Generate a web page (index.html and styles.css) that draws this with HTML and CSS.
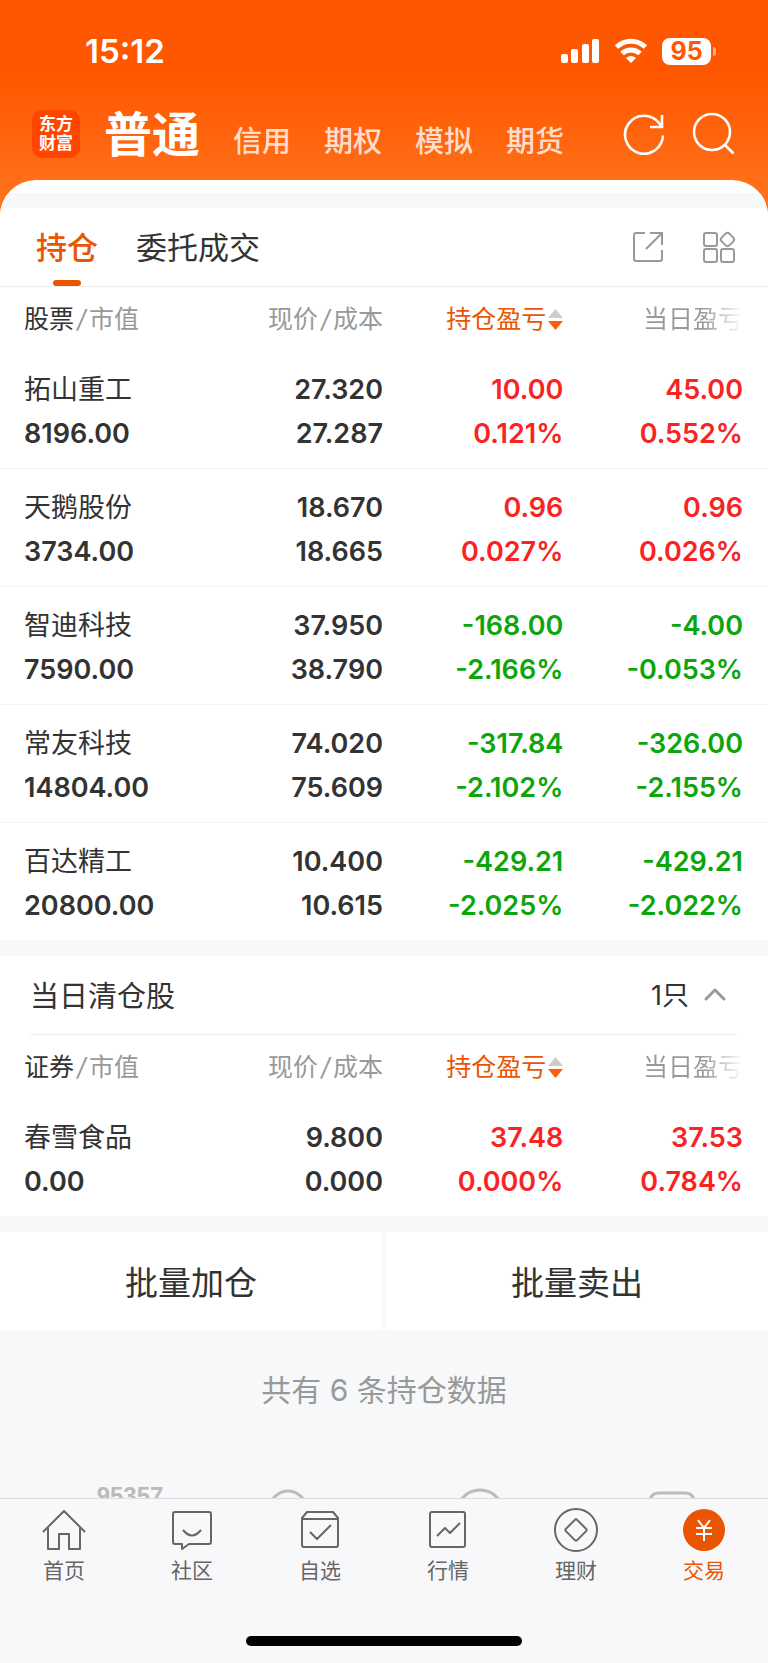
FILE: index.html
```html
<!DOCTYPE html>
<html lang="zh-CN">
<head>
  <meta charset="UTF-8" />
  <meta name="viewport" content="width=device-width, initial-scale=1.0"/>
  <title>东方财富 - 持仓</title>
  <link rel="stylesheet" href="styles.css">
</head>
<body>
  <div class="app">
    <header class="top">
      <div class="status">
        <span class="time">15:12</span>
        <div class="status-icons">
          <svg width="39" height="26" viewBox="0 0 39 26" fill="#fff">
            <rect x="0" y="16" width="7" height="9" rx="2"/>
            <rect x="10" y="11" width="7" height="14" rx="2"/>
            <rect x="21" y="6" width="7" height="19" rx="2"/>
            <rect x="31" y="1" width="7" height="24" rx="2"/>
          </svg>
          <svg width="34" height="26" viewBox="0 0 34 26" fill="none" stroke="#fff" stroke-width="5">
            <path d="M2.500 9a21 21 0 0 1 29 0"/>
            <path d="M8 15.500a13 13 0 0 1 18 0"/>
            <path d="M17 25l-5-5q5-4 10 0z" fill="#fff" stroke="none"/>
          </svg>
          <div class="battery">95</div>
        </div>
      </div>

      <div class="account">
        <div class="logo">东方<br>财富</div>
        <nav class="account-tabs">
          <a href="#" class="current">普通</a>
          <a href="#">信用</a>
          <a href="#">期权</a>
          <a href="#">模拟</a>
          <a href="#">期货</a>
        </nav>
        <div class="account-tools">
          <button class="icon-btn" aria-label="刷新">
            <svg width="44" height="44" viewBox="0 0 44 44" fill="none" stroke="#fff" stroke-width="2.600">
              <path d="M41 23.500a19 19 0 1 1-4-12.500l3 4"/>
              <path d="M40 3v12H28"/>
            </svg>
          </button>
          <button class="icon-btn" aria-label="搜索">
            <svg width="44" height="44" viewBox="0 0 44 44" fill="none" stroke="#fff" stroke-width="2.600">
              <circle cx="20" cy="20" r="18"/>
              <path d="M32.500 32.500l9 9"/>
            </svg>
          </button>
        </div>
      </div>
    </header>

    <main class="sheet">
      <div class="band"></div>

      <div class="tabs">
        <button class="tab active">持仓</button>
        <button class="tab">委托成交</button>
        <div class="tab-tools">
          <button class="icon-btn" aria-label="分享">
            <svg width="32" height="32" viewBox="0 0 32 32" fill="none" stroke="#999" stroke-width="2">
              <path d="M13 2H4a2 2 0 0 0-2 2v24a2 2 0 0 0 2 2h24a2 2 0 0 0 2-2V19"/>
              <path d="M18 2h12v12M30 2L14 18"/>
            </svg>
          </button>
          <button class="icon-btn" aria-label="更多">
            <svg width="34" height="32" viewBox="0 0 34 32" fill="none" stroke="#999" stroke-width="2">
              <rect x="2" y="2" width="13" height="13" rx="2"/>
              <rect x="2" y="18" width="13" height="13" rx="2"/>
              <rect x="19" y="18" width="13" height="13" rx="2"/>
              <rect x="20" y="3" width="11" height="11" rx="3" transform="rotate(45 25.500 8.500)"/>
            </svg>
          </button>
        </div>
      </div>

      <table class="stocks">
        <thead>
          <tr>
            <th><b>股票</b><i>/</i>市值</th>
            <th>现价<i>/</i>成本</th>
            <th class="sorted">持仓盈亏<svg width="15" height="22" viewBox="0 0 15 22"><path d="M0 9L7.500 0 15 9z" fill="#ccc"/><path d="M0 12h15L7.500 21z" fill="#ff5c0a"/></svg></th>
            <th><span class="fade">当日盈亏</span></th>
          </tr>
        </thead>
        <tbody>
          <tr>
            <td><span class="name">拓山重工</span>8196.00</td>
            <td>27.320<br>27.287</td>
            <td class="up">10.00<br>0.121%</td>
            <td class="up">45.00<br>0.552%</td>
          </tr>
          <tr>
            <td><span class="name">天鹅股份</span>3734.00</td>
            <td>18.670<br>18.665</td>
            <td class="up">0.96<br>0.027%</td>
            <td class="up">0.96<br>0.026%</td>
          </tr>
          <tr>
            <td><span class="name">智迪科技</span>7590.00</td>
            <td>37.950<br>38.790</td>
            <td class="down">-168.00<br>-2.166%</td>
            <td class="down">-4.00<br>-0.053%</td>
          </tr>
          <tr>
            <td><span class="name">常友科技</span>14804.00</td>
            <td>74.020<br>75.609</td>
            <td class="down">-317.84<br>-2.102%</td>
            <td class="down">-326.00<br>-2.155%</td>
          </tr>
          <tr>
            <td><span class="name">百达精工</span>20800.00</td>
            <td>10.400<br>10.615</td>
            <td class="down">-429.21<br>-2.025%</td>
            <td class="down">-429.21<br>-2.022%</td>
          </tr>
        </tbody>
      </table>

      <div class="gap"></div>

      <div class="closed-head">
        <h2>当日清仓股</h2>
        <button class="count">1只
          <svg width="22" height="14" viewBox="0 0 22 14" fill="none" stroke="#999" stroke-width="3" stroke-linecap="round" stroke-linejoin="round"><path d="M2 12l9-9 9 9"/></svg>
        </button>
      </div>

      <table class="stocks">
        <thead>
          <tr>
            <th><b>证券</b><i>/</i>市值</th>
            <th>现价<i>/</i>成本</th>
            <th class="sorted">持仓盈亏<svg width="15" height="22" viewBox="0 0 15 22"><path d="M0 9L7.500 0 15 9z" fill="#ccc"/><path d="M0 12h15L7.500 21z" fill="#ff5c0a"/></svg></th>
            <th><span class="fade">当日盈亏</span></th>
          </tr>
        </thead>
        <tbody>
          <tr>
            <td><span class="name">春雪食品</span>0.00</td>
            <td>9.800<br>0.000</td>
            <td class="up">37.48<br>0.000%</td>
            <td class="up">37.53<br>0.784%</td>
          </tr>
        </tbody>
      </table>

      <div class="gap"></div>

      <div class="batch">
        <button>批量加仓</button>
        <button>批量卖出</button>
      </div>

      <p class="total">共有 6 条持仓数据</p>

      <!-- service shortcuts, scrolled under the tab bar -->
      <div class="services">
        <div class="hotline">95357</div>
        <svg width="60" height="60" viewBox="0 0 60 60"><circle cx="30" cy="21" r="18"/></svg>
        <svg width="60" height="60" viewBox="0 0 60 60"><circle cx="30" cy="25" r="23"/></svg>
        <svg width="60" height="60" viewBox="0 0 60 60"><rect x="8" y="5" width="44" height="50" rx="8"/></svg>
      </div>
    </main>

    <footer class="bottom">
      <nav class="tabbar">
        <a href="#">
          <svg width="48" height="48" viewBox="0 0 48 48"><path d="M3 26L24 5l21 21M8 22v21h11V28h10v15h11V22"/></svg>
          首页
        </a>
        <a href="#">
          <svg width="48" height="48" viewBox="0 0 48 48"><path d="M7 6h34a2 2 0 0 1 2 2v28a2 2 0 0 1-2 2H21l-7 5v-5H7a2 2 0 0 1-2-2V8a2 2 0 0 1 2-2zM15 24q9 11 18 0"/></svg>
          社区
        </a>
        <a href="#">
          <svg width="48" height="48" viewBox="0 0 48 48"><path d="M11 6h26l5 6v27a2 2 0 0 1-2 2H8a2 2 0 0 1-2-2V12zM6 13h36M14 26l7 7 14-14"/></svg>
          自选
        </a>
        <a href="#">
          <svg width="48" height="48" viewBox="0 0 48 48"><rect x="6" y="6" width="35" height="35" rx="2"/><path d="M13 30l8-8 5 5 10-10"/></svg>
          行情
        </a>
        <a href="#">
          <svg width="48" height="48" viewBox="0 0 48 48"><circle cx="24" cy="24" r="21"/><rect x="16" y="16" width="16" height="16" rx="2" transform="rotate(45 24 24)"/></svg>
          理财
        </a>
        <a href="#" class="current">
          <svg width="48" height="48" viewBox="0 0 48 48"><circle class="disc" cx="24" cy="24" r="21"/><path class="yen" d="M18 14l6 8 6-8M24 22v13M16 22h16M16 28h16"/></svg>
          交易
        </a>
      </nav>
      <div class="home-bar"></div>
    </footer>
  </div>
</body>
</html>
```

FILE: styles.css
```css
* {
  box-sizing: border-box;
  margin: 0;
  padding: 0;
}

body {
  font-family: Inter, 'Noto Sans CJK SC', sans-serif;
  color: #333;
  background: #f7f8fa;
}

button {
  font: inherit;
  color: inherit;
  background: none;
  border: none;
  cursor: pointer;
}

a {
  color: inherit;
  text-decoration: none;
}

svg {
  display: block;
}

.app {
  height: 100vh;
  display: flex;
  flex-direction: column;
  overflow: hidden;
  background: linear-gradient(#ff5700 75px, #ff701a 190px);
}

/* header */
.top {
  color: #fff;
}

.status {
  display: flex;
  align-items: center;
  justify-content: space-between;
  height: 102px;
  padding: 0 57px 0 85px;
}

.time {
  font-size: 33px;
  font-weight: 600;
}

.status-icons {
  display: flex;
  align-items: center;
  gap: 14px;
}

.battery {
  position: relative;
  width: 49px;
  height: 27px;
  border-radius: 8px;
  background: #fff;
  color: #ff5700;
  font-size: 25px;
  line-height: 27px;
  font-weight: 700;
  text-align: center;
}

.battery::after {
  content: '';
  position: absolute;
  right: -5px;
  top: 9px;
  width: 3px;
  height: 9px;
  border-radius: 0 3px 3px 0;
  background: rgba(255, 255, 255, 0.5);
}

.account {
  display: flex;
  align-items: center;
  gap: 24px;
  height: 78px;
  padding: 0 32px 14px;
}

.logo {
  width: 48px;
  height: 48px;
  padding-top: 5px;
  border-radius: 10px;
  background: #ff4600;
  font-size: 17px;
  line-height: 19px;
  font-weight: 700;
  text-align: center;
}

.account-tabs {
  flex: 1;
  display: flex;
  align-items: baseline;
  gap: 33px;
  padding-top: 8px;
  font-size: 29px;
  line-height: 64px;
  font-weight: 500;
  color: rgba(255, 255, 255, 0.8);
}

.account-tabs .current {
  font-size: 48px;
  font-weight: 700;
  color: #fff;
}

.account-tools {
  display: flex;
  gap: 26px;
}

/* white sheet */
.sheet {
  flex: 1;
  min-height: 0;
  overflow: hidden;
  padding-top: 13px;
  border-radius: 36px 36px 0 0;
  background: linear-gradient(#fff 60px, #f7f8fa 60px);
}

.band {
  height: 15px;
  background: #f7f8fa;
}

.tabs {
  display: flex;
  align-items: center;
  gap: 38px;
  height: 79px;
  padding: 0 32px 0 36px;
  border-bottom: 1px solid #eee;
  background: #fff;
}

.tab {
  position: relative;
  height: 78px;
  padding-bottom: 4px;
  font-size: 31px;
}

.tab.active {
  color: #ea5504;
  font-weight: 500;
}

.tab.active::after {
  content: '';
  position: absolute;
  left: 50%;
  bottom: 0;
  width: 28px;
  height: 6px;
  margin-left: -14px;
  border-radius: 3px;
  background: #ea5504;
}

.tab-tools {
  display: flex;
  gap: 38px;
  margin-left: auto;
}

/* positions */
.stocks {
  width: 100%;
  table-layout: fixed;
  border-collapse: collapse;
  background: #fff;
}

.stocks th {
  height: 63px;
  padding-bottom: 4px;
  font-size: 25px;
  font-weight: 400;
  color: #999;
  text-align: right;
  white-space: nowrap;
}

.stocks th:nth-child(1) {
  width: 27%;
}

.stocks th:nth-child(2) {
  width: 23%;
}

.stocks th:nth-child(3) {
  width: 24%;
}

.stocks th:first-child,
.stocks td:first-child {
  padding-left: 24px;
  text-align: left;
}

.stocks th:nth-child(2),
.stocks td:nth-child(2) {
  padding-right: 1px;
}

.stocks th:nth-child(3),
.stocks td:nth-child(3) {
  padding-right: 5px;
}

.stocks th:last-child,
.stocks td:last-child {
  padding-right: 25px;
}

.stocks th b {
  font-weight: 400;
  color: #333;
}

.stocks th i {
  padding: 0 3px;
}

.stocks th.sorted {
  color: #ea5504;
}

.sorted svg {
  display: inline-block;
  margin-left: 2px;
  vertical-align: -3px;
}

.fade {
  background: linear-gradient(90deg, #999 60%, #fff);
  -webkit-background-clip: text;
  background-clip: text;
  color: transparent;
}

.stocks td {
  height: 118px;
  padding-top: 6px;
  font-size: 27px;
  line-height: 44px;
  font-weight: 600;
  text-align: right;
}

.stocks tbody tr + tr {
  border-top: 1px solid #f3f3f3;
}

.name {
  display: block;
  font-weight: 400;
}

.stocks .up {
  color: #fa2323;
}

.stocks .down {
  color: #0ca50c;
}

.gap {
  height: 16px;
  background: #f7f8fa;
}

.closed-head {
  display: flex;
  align-items: center;
  justify-content: space-between;
  height: 79px;
  padding: 0 42px 4px 30px;
  background: linear-gradient(#eee, #eee) 30px 100% / calc(100% - 60px) 1px no-repeat #fff;
}

.closed-head h2 {
  font-size: 29px;
  font-weight: 400;
}

.count {
  display: flex;
  align-items: center;
  gap: 15px;
  font-size: 27px;
}

.batch {
  display: flex;
  gap: 4px;
}

.batch button {
  flex: 1;
  height: 98px;
  background: #fff;
  font-size: 33px;
}

.total {
  padding-top: 38px;
  font-size: 30px;
  line-height: 44px;
  text-align: center;
  color: #999;
}

.services {
  display: grid;
  grid-template-columns: repeat(4, 1fr);
  justify-items: center;
  padding-top: 76px;
}

.services svg {
  fill: none;
  stroke: #bbb;
  stroke-width: 3;
}

.hotline {
  padding-left: 68px;
  font-family: 'Liberation Sans', sans-serif;
  font-size: 24px;
  line-height: 16px;
  font-weight: 700;
  color: #bbb;
}

/* bottom tab bar */
.bottom {
  border-top: 1px solid #ddd;
  background: #f8f8fa;
}

.tabbar {
  display: flex;
  padding-top: 7px;
}

.tabbar a {
  flex: 1;
  display: flex;
  flex-direction: column;
  align-items: center;
  font-size: 21px;
  line-height: 34px;
  color: #666;
}

.tabbar svg {
  fill: none;
  stroke: #666;
  stroke-width: 2;
  stroke-linejoin: round;
}

.tabbar .current {
  color: #ea5504;
}

.tabbar .disc {
  fill: #ea5504;
  stroke: none;
}

.tabbar .yen {
  stroke: #fff;
}

.home-bar {
  width: 36%;
  height: 10px;
  margin: 48px auto 17px;
  border-radius: 5px;
  background: #000;
}
```
